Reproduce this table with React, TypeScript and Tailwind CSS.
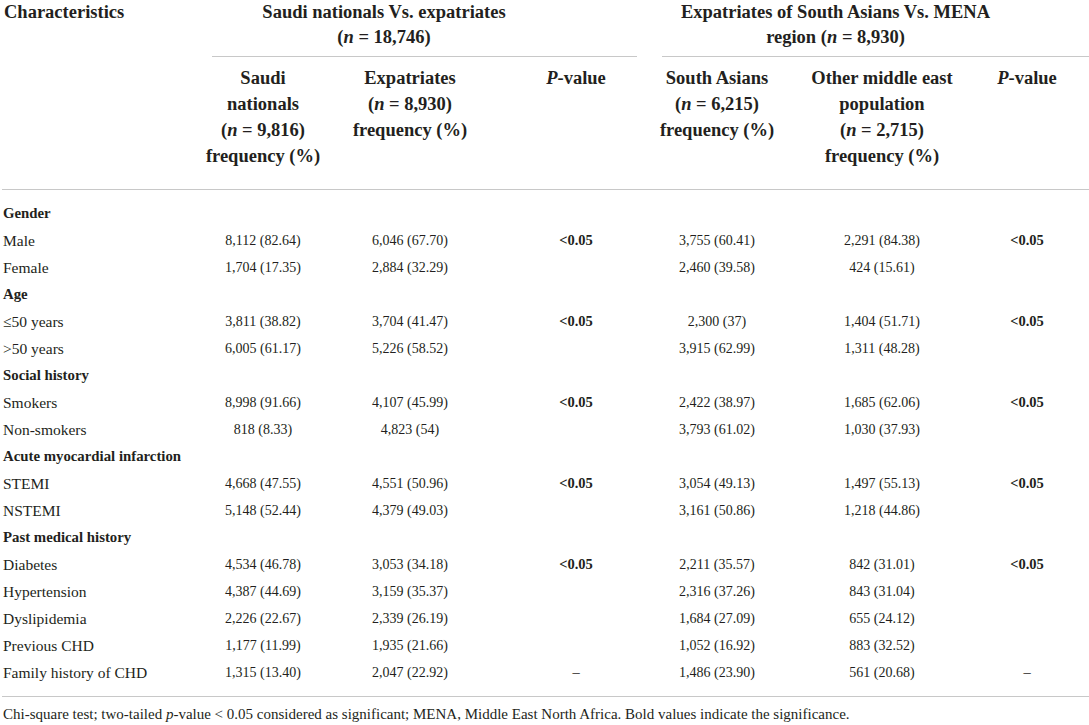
import React from 'react';

type Row = {
  label: string;
  head?: boolean;
  saudi?: string;
  expat?: string;
  p1?: string;
  south?: string;
  other?: string;
  p2?: string;
};

const rows: Row[] = [
  { label: 'Gender', head: true },
  { label: 'Male', saudi: '8,112 (82.64)', expat: '6,046 (67.70)', p1: '<0.05', south: '3,755 (60.41)', other: '2,291 (84.38)', p2: '<0.05' },
  { label: 'Female', saudi: '1,704 (17.35)', expat: '2,884 (32.29)', south: '2,460 (39.58)', other: '424 (15.61)' },
  { label: 'Age', head: true },
  { label: '≤50 years', saudi: '3,811 (38.82)', expat: '3,704 (41.47)', p1: '<0.05', south: '2,300 (37)', other: '1,404 (51.71)', p2: '<0.05' },
  { label: '>50 years', saudi: '6,005 (61.17)', expat: '5,226 (58.52)', south: '3,915 (62.99)', other: '1,311 (48.28)' },
  { label: 'Social history', head: true },
  { label: 'Smokers', saudi: '8,998 (91.66)', expat: '4,107 (45.99)', p1: '<0.05', south: '2,422 (38.97)', other: '1,685 (62.06)', p2: '<0.05' },
  { label: 'Non-smokers', saudi: '818 (8.33)', expat: '4,823 (54)', south: '3,793 (61.02)', other: '1,030 (37.93)' },
  { label: 'Acute myocardial infarction', head: true },
  { label: 'STEMI', saudi: '4,668 (47.55)', expat: '4,551 (50.96)', p1: '<0.05', south: '3,054 (49.13)', other: '1,497 (55.13)', p2: '<0.05' },
  { label: 'NSTEMI', saudi: '5,148 (52.44)', expat: '4,379 (49.03)', south: '3,161 (50.86)', other: '1,218 (44.86)' },
  { label: 'Past medical history', head: true },
  { label: 'Diabetes', saudi: '4,534 (46.78)', expat: '3,053 (34.18)', p1: '<0.05', south: '2,211 (35.57)', other: '842 (31.01)', p2: '<0.05' },
  { label: 'Hypertension', saudi: '4,387 (44.69)', expat: '3,159 (35.37)', south: '2,316 (37.26)', other: '843 (31.04)' },
  { label: 'Dyslipidemia', saudi: '2,226 (22.67)', expat: '2,339 (26.19)', south: '1,684 (27.09)', other: '655 (24.12)' },
  { label: 'Previous CHD', saudi: '1,177 (11.99)', expat: '1,935 (21.66)', south: '1,052 (16.92)', other: '883 (32.52)' },
  { label: 'Family history of CHD', saudi: '1,315 (13.40)', expat: '2,047 (22.92)', p1: '–', south: '1,486 (23.90)', other: '561 (20.68)', p2: '–' },
];

const cols = 'grid grid-cols-[200px_126px_168px_164px_118px_212px_78px_1fr]';

function N({ v }: { v: string }) {
  return (
    <>
      (<i>n</i> = {v})
    </>
  );
}

export default function App() {
  return (
    <div className="w-[1089px] h-[725px] overflow-hidden bg-white text-[#231f20] font-['Liberation_Serif',serif]">
      {/* header */}
      <div className="ml-[2px] border-b border-[#c8c8c8]">
        <div className="flex items-start text-[18.5px] font-bold leading-[25px]">
          <div className="w-[210px] pl-[2px] whitespace-nowrap">Characteristics</div>
          <div className="w-[425px] pr-[81px] pb-[6px] text-center border-b border-[#c8c8c8] whitespace-nowrap">
            Saudi nationals Vs. expatriates
            <br />
            <N v="18,746" />
          </div>
          <div className="w-[25px]" />
          <div className="flex-1 pr-[80px] pb-[6px] text-center border-b border-[#c8c8c8] whitespace-nowrap">
            Expatriates of South Asians Vs. MENA
            <br />
            region <N v="8,930" />
          </div>
        </div>
        <div className={`${cols} -ml-[2px] pt-[8px] pb-[20px] text-[18.5px] font-bold leading-[26px] text-center whitespace-nowrap`}>
          <div />
          <div>
            Saudi
            <br />
            nationals
            <br />
            <N v="9,816" />
            <br />
            frequency (%)
          </div>
          <div>
            Expatriates
            <br />
            <N v="8,930" />
            <br />
            frequency (%)
          </div>
          <div>
            <i>P</i>-value
          </div>
          <div>
            South Asians
            <br />
            <N v="6,215" />
            <br />
            frequency (%)
          </div>
          <div>
            Other middle east
            <br />
            population
            <br />
            <N v="2,715" />
            <br />
            frequency (%)
          </div>
          <div>
            <i>P</i>-value
          </div>
          <div />
        </div>
      </div>

      {/* body */}
      <div className="ml-[2px] pt-[10px] pb-[10px] border-b border-[#c8c8c8]">
        {rows.map((r) => (
          <div key={r.label} className={`${cols} -ml-[2px] h-[27px] items-center leading-[27px] whitespace-nowrap`}>
            <div className={`pl-[3px] ${r.head ? 'font-bold text-[14.8px]' : 'text-[15.5px]'}`}>{r.label}</div>
            <div className="text-center text-[14px]">{r.saudi}</div>
            <div className="text-center text-[14px]">{r.expat}</div>
            <div className={`text-center text-[14.5px] ${r.p1 === '<0.05' ? 'font-bold' : ''}`}>{r.p1}</div>
            <div className="text-center text-[14px]">{r.south}</div>
            <div className="text-center text-[14px]">{r.other}</div>
            <div className={`text-center text-[14.5px] ${r.p2 === '<0.05' ? 'font-bold' : ''}`}>{r.p2}</div>
            <div />
          </div>
        ))}
      </div>

      {/* footnote */}
      <p className="pt-[7px] pl-[3px] text-[15px] leading-[20px] whitespace-nowrap">
        Chi-square test; two-tailed <i>p</i>-value &lt; 0.05 considered as significant; MENA, Middle East North Africa. Bold values indicate the significance.
      </p>
    </div>
  );
}
